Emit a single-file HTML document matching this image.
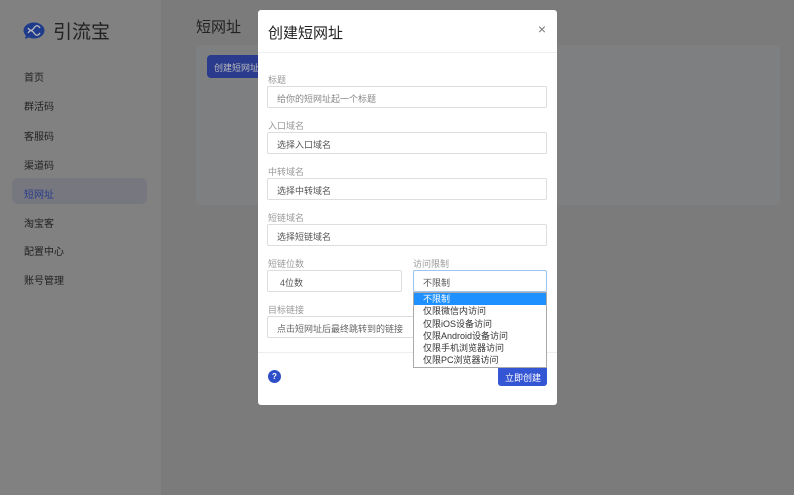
<!DOCTYPE html><html><head><meta charset="utf-8"><style>
*{box-sizing:border-box;margin:0;padding:0}
body{width:794px;height:495px;position:relative;overflow:hidden;background:#7b7b7c;font-family:"Liberation Sans","Noto Sans CJK SC",sans-serif;}
.side{position:absolute;left:0;top:0;width:161px;height:495px;background:#818182}
.logo{position:absolute;left:23px;top:17px;font-size:19px;color:#222;display:flex;align-items:center;gap:8px}
.nav{position:absolute;left:24px;font-size:10px;color:#222}
.act{position:absolute;left:12px;top:178px;width:135px;height:26px;background:#77787f;border-radius:6px}
.card{position:absolute;left:196px;top:45px;width:584px;height:160px;background:#7e7f80;border-radius:3px}
.modal{position:absolute;left:258px;top:10px;width:299px;height:395px;background:#fff;border-radius:3px}
.hd{height:43px;border-bottom:1px solid #eee;font-size:15px;color:#222;padding:12px 0 0 10px}
.x{position:absolute;right:11px;top:11px;font-size:14px;color:#777}
.lb{position:absolute;left:10px;font-size:9px;color:#999}
.in{position:absolute;left:9px;width:280px;height:22px;border:1px solid #ddd;border-radius:2px;font-size:9px;color:#555;padding:5px 0 0 9px}
.dd{position:absolute;left:155px;top:282px;width:134px;height:76px;border:1px solid #aaa;background:#fff;font-size:9px;color:#333}
.dd div{height:12.3px;line-height:12px;padding-left:9px}
</style></head><body>
<div class="side"></div>
<div class="logo"><svg width="22" height="18" viewBox="0 0 22 18"><ellipse cx="11" cy="8.5" rx="10.5" ry="8" fill="#1e3a8a"/><path d="M3 13 L2 17 L7 15Z" fill="#1e3a8a"/><path d="M5 6c2 3 4 3 6 0s4-3 6 0M5 11c2-3 4-3 6 0s4 3 6 0" stroke="#bbb" stroke-width="1.3" fill="none"/></svg>引流宝</div>
<div class="act"></div>
<div class="nav" style="top:69px">首页</div>
<div class="nav" style="top:98px">群活码</div>
<div class="nav" style="top:128px">客服码</div>
<div class="nav" style="top:157px">渠道码</div>
<div class="nav" style="top:186px;color:#2a3d8a">短网址</div>
<div class="nav" style="top:215px">淘宝客</div>
<div class="nav" style="top:243px">配置中心</div>
<div class="nav" style="top:272px">账号管理</div>
<div style="position:absolute;left:196px;top:16px;font-size:15px;color:#222">短网址</div>
<div class="card"></div>
<div style="position:absolute;left:207px;top:55px;width:60px;height:23px;background:#2a3a8c;border-radius:4px;color:#bbb;font-size:9px;padding:6px 0 0 7px">创建短网址</div>
<div class="modal">
<div class="hd">创建短网址</div><div class="x">×</div>
<div class="lb" style="top:63px">标题</div><div class="in" style="top:76px;color:#888">给你的短网址起一个标题</div>
<div class="lb" style="top:109px">入口域名</div><div class="in" style="top:122px">选择入口域名</div>
<div class="lb" style="top:155px">中转域名</div><div class="in" style="top:168px">选择中转域名</div>
<div class="lb" style="top:201px">短链域名</div><div class="in" style="top:214px">选择短链域名</div>
<div class="lb" style="top:247px">短链位数</div><div class="in" style="top:260px;width:135px;padding-left:12px">4位数</div>
<div class="lb" style="top:247px;left:155px">访问限制</div><div class="in" style="top:260px;left:155px;width:134px;border-color:#9cc4ee">不限制</div>
<div class="lb" style="top:293px">目标链接</div><div class="in" style="top:306px;color:#666">点击短网址后最终跳转到的链接</div>
<div style="position:absolute;left:0;top:342px;width:299px;border-top:1px solid #eee"></div>
<div style="position:absolute;left:10px;top:360px;width:13px;height:13px;border-radius:50%;background:#2f4fc9;color:#fff;font-size:8px;font-weight:bold;text-align:center;line-height:13px">?</div>
<div style="position:absolute;left:240px;top:356px;width:49px;height:20px;background:#3556d4;border-radius:3px;color:#fff;font-size:9px;padding:5px 0 0 7px">立即创建</div>
<div class="dd"><div style="background:#1e90ff;color:#fff">不限制</div><div>仅限微信内访问</div><div>仅限iOS设备访问</div><div>仅限Android设备访问</div><div>仅限手机浏览器访问</div><div>仅限PC浏览器访问</div></div>
</div>
</body></html>
